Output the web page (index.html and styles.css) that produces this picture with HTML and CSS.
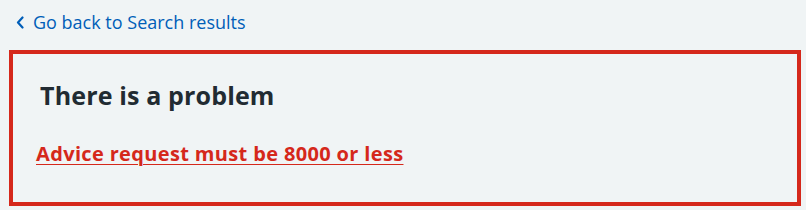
FILE: index.html
```html
<!DOCTYPE html>
<html lang="en">
<head>
    <meta charset="UTF-8">
    <meta name="viewport" content="width=device-width, initial-scale=1.0">
    <title>There is a problem</title>
    <link rel="stylesheet" href="styles.css">
</head>
<body>
    <div class="page">
        <a href="#" class="back-link">
            <svg class="back-link__icon" viewBox="0 0 8 13" width="8" height="13" aria-hidden="true">
                <path d="M6.5 1.5 L2 6.5 L6.5 11.5" fill="none" stroke="currentColor" stroke-width="2.2" stroke-linecap="round" stroke-linejoin="round"/>
            </svg>
            Go back to Search results
        </a>

        <div class="error-summary" role="alert">
            <h2 class="error-summary__title">There is a problem</h2>
            <ul class="error-summary__list">
                <li><a href="#advice">Advice request must be 8000 or less</a></li>
            </ul>
        </div>
    </div>
</body>
</html>
```

FILE: styles.css
```css
:root{
    --cor-fundo: #f0f4f5;
    --cor-texto: #212b32;
    --cor-link: #005eb8;
    --cor-erro: #d5281b;
}

body{
    margin: 0;
    background-color: var(--cor-fundo);
    color: var(--cor-texto);
    font-family: "Open Sans", Arial, sans-serif;
}

.page{
    width: 792px;
    padding: 0 0 0 9px;
}

.back-link{
    display: inline-flex;
    align-items: center;
    gap: 9px;
    margin: 11px 0 0 7px;
    height: 22px;
    color: var(--cor-link);
    font-size: 18px;
    text-decoration: none;
}

.back-link__icon{
    flex: none;
}

.error-summary{
    box-sizing: border-box;
    margin-top: 16px;
    height: 156px;
    border: 4px solid var(--cor-erro);
    padding: 24px 23px;
}

.error-summary__title{
    margin: 1px 0 0 4px;
    font-size: 25px;
    font-weight: bold;
    letter-spacing: 0.15px;
    line-height: 32px;
}

.error-summary__list{
    list-style: none;
    margin: 30px 0 0;
    padding: 0;
}

.error-summary__list a{
    color: var(--cor-erro);
    font-size: 20px;
    font-weight: bold;
    letter-spacing: 0.35px;
    line-height: 26px;
    text-decoration: underline;
    text-underline-offset: 3px;
    text-decoration-thickness: 1px;
}
```
